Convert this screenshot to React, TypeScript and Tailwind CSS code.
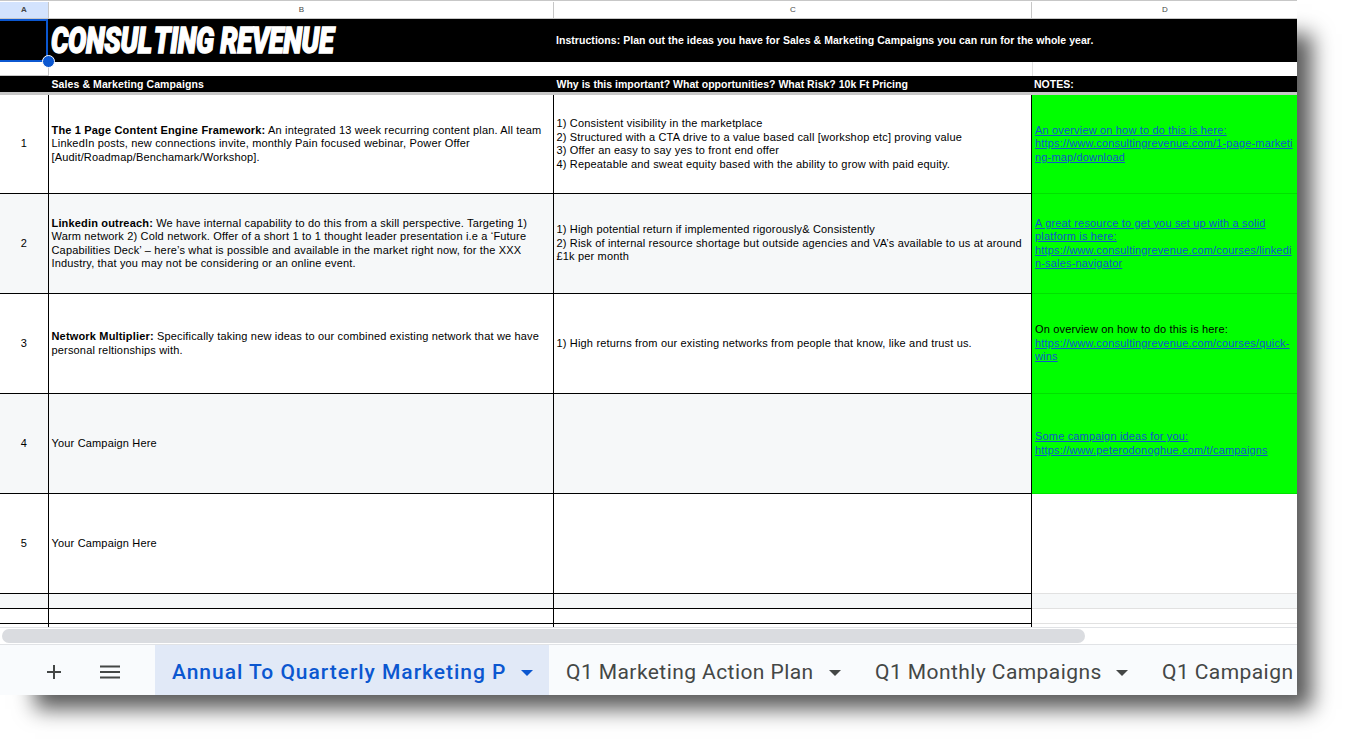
const font = "font-['Liberation_Sans',Arial,sans-serif]";

const Caret = ({ color }: { color: string }) => (
    <svg width="14" height="8" viewBox="0 0 14 8" className="shrink-0">
        <path d="M1 1h12L7 7z" fill={color} />
    </svg>
);

const Link = ({ children }: { children: React.ReactNode }) => (
    <span className="block text-[#1155cc] underline">{children}</span>
);

const rows = [
    {
        n: 1,
        h: "h-[99px]",
        bg: "bg-white",
        b: (
            <>
                <b>The 1 Page Content Engine Framework:</b> An integrated 13 week recurring content plan. All team<br />
                LinkedIn posts, new connections invite, monthly Pain focused webinar, Power Offer<br />
                [Audit/Roadmap/Benchamark/Workshop].
            </>
        ),
        c: (
            <>
                1) Consistent visibility in the marketplace<br />
                2) Structured with a CTA drive to a value based call [workshop etc] proving value<br />
                3) Offer an easy to say yes to front end offer<br />
                4) Repeatable and sweat equity based with the ability to grow with paid equity.
            </>
        ),
        d: (
            <>
                <Link>An overview on how to do this is here:</Link>
                <Link>https://www.consultingrevenue.com/1-page-marketi</Link>
                <Link>ng-map/download</Link>
            </>
        ),
    },
    {
        n: 2,
        h: "h-[100px]",
        bg: "bg-[#f6f8f9]",
        b: (
            <>
                <b>Linkedin outreach:</b> We have internal capability to do this from a skill perspective. Targeting 1)<br />
                Warm network 2) Cold network. Offer of a short 1 to 1 thought leader presentation i.e a ‘Future<br />
                Capabilities Deck’ – here’s what is possible and available in the market right now, for the XXX<br />
                Industry, that you may not be considering or an online event.
            </>
        ),
        c: (
            <>
                1) High potential return if implemented rigorously&amp; Consistently<br />
                2) Risk of internal resource shortage but outside agencies and VA’s available to us at around<br />
                £1k per month
            </>
        ),
        d: (
            <>
                <Link>A great resource to get you set up with a solid</Link>
                <Link>platform is here:</Link>
                <Link>https://www.consultingrevenue.com/courses/linkedi</Link>
                <Link>n-sales-navigator</Link>
            </>
        ),
    },
    {
        n: 3,
        h: "h-[100px]",
        bg: "bg-white",
        b: (
            <>
                <b>Network Multiplier:</b> Specifically taking new ideas to our combined existing network that we have<br />
                personal reltionships with.
            </>
        ),
        c: <>1) High returns from our existing networks from people that know, like and trust us.</>,
        d: (
            <>
                <span className="block">On overview on how to do this is here:</span>
                <Link>https://www.consultingrevenue.com/courses/quick-</Link>
                <Link>wins</Link>
            </>
        ),
    },
    {
        n: 4,
        h: "h-[100px]",
        bg: "bg-[#f6f8f9]",
        b: <>Your Campaign Here</>,
        c: null,
        d: (
            <>
                <Link>Some campaign ideas for you:</Link>
                <Link>https://www.peterodonoghue.com/t/campaigns</Link>
            </>
        ),
    },
    { n: 5, h: "h-[100px]", bg: "bg-white", b: <>Your Campaign Here</>, c: null, d: null },
];

const grid = "grid grid-cols-[49px_505px_478px_265px]";

const Tab = ({ label, w }: { label: string; w: string }) => (
    <div className={`flex items-center justify-between shrink-0 pl-[17px] pr-[16px] ${w}`}>
        <span className="whitespace-nowrap">{label}</span>
        <Caret color="#444746" />
    </div>
);

export default function App() {
    return (
        <div className={`${font} h-[745px] w-[1347px] overflow-hidden bg-white`}>
            <div className="flex h-[695px] w-[1297px] flex-col overflow-hidden bg-white text-[11px] leading-[13.5px] tracking-[0.17px] text-black shadow-[25px_24px_20px_-10px_rgba(0,0,0,0.65)]">
                {/* column letters */}
                <div className={`${grid} h-[19px] shrink-0 border-t border-b border-[#c7c7c7] pt-[1px] text-[8px] text-[#444746]`}>
                    <div className="flex items-center justify-center border-r border-[#c7c7c7] bg-[#d3e3fd] font-bold">A</div>
                    <div className="flex items-center justify-center border-r border-[#c7c7c7] pl-[1px]">B</div>
                    <div className="flex items-center justify-center border-r border-[#c7c7c7] pl-[1px]">C</div>
                    <div className="flex items-center justify-center pl-[1px]">D</div>
                </div>

                {/* title row */}
                <div className={`${grid} relative h-[43px] shrink-0 bg-black text-white`}>
                    <div className="absolute left-[-2px] top-0 h-[43px] w-[50px] border-2 border-[#0b57d0]" />
                    <div className="absolute left-[42px] top-[36px] h-[13px] w-[13px] rounded-full border border-white bg-[#0b57d0]" />
                    <div />
                    <div className="flex items-center overflow-hidden pl-[2px]">
                        <span className="origin-left scale-x-[0.74] whitespace-nowrap text-[37px] font-black italic leading-none tracking-[-0.5px] font-['Roboto',sans-serif] [-webkit-text-stroke:1.5px_white]">
                            <span className="[word-spacing:-5px]">CONSUL TING</span> REVENUE
                        </span>
                    </div>
                    <div className="col-span-2 flex items-center pl-[2px] text-[10.5px] font-bold tracking-[0.05px]">
                        Instructions: Plan out the ideas you have for Sales &amp; Marketing Campaigns you can run for the whole year.
                    </div>
                </div>

                {/* spacer row */}
                <div className={`${grid} h-[14px] shrink-0`}>
                    <div className="border-r border-b border-[#c7c7c7]" />
                    <div />
                    <div />
                    <div className="border-l border-[#e1e1e1]" />
                </div>

                {/* header row */}
                <div className={`${grid} h-[16px] shrink-0 items-center bg-black pt-[1px] text-[10.5px] font-bold tracking-[0.02px] text-white`}>
                    <div />
                    <div className="pl-[2.5px] tracking-[0.09px]">Sales &amp; Marketing Campaigns</div>
                    <div className="pl-[2.5px]">Why is this important? What opportunities? What Risk? 10k Ft Pricing</div>
                    <div className="pl-[2px]">NOTES:</div>
                </div>
                <div className="h-[3px] shrink-0 bg-[#c7c7c7]" />

                {/* data rows */}
                {rows.map((r) => (
                    <div key={r.n} className={`${grid} ${r.h} ${r.bg} shrink-0`}>
                        <div className="flex items-center justify-center border-r border-b border-black">{r.n}</div>
                        <div className="flex items-center border-r border-b border-black pl-[2.5px] whitespace-nowrap">
                            <div>{r.b}</div>
                        </div>
                        <div className="flex items-center border-r border-b border-black pl-[2.5px] whitespace-nowrap">
                            <div>{r.c}</div>
                        </div>
                        <div className={`flex items-center pl-[3px] whitespace-nowrap ${r.n < 5 ? "border-b border-[#00e000] bg-[#00ff00]" : "border-b border-[#e1e1e1]"}`}>
                            <div>{r.d}</div>
                        </div>
                    </div>
                ))}

                {/* empty rows */}
                <div className={`${grid} h-[15px] shrink-0 bg-[#f6f8f9]`}>
                    <div className="border-r border-b border-black" />
                    <div className="border-r border-b border-black" />
                    <div className="border-r border-b border-black" />
                    <div className="border-b border-[#e1e1e1]" />
                </div>
                <div className={`${grid} h-[15px] shrink-0`}>
                    <div className="border-r border-b border-black" />
                    <div className="border-r border-b border-black" />
                    <div className="border-r border-b border-black" />
                    <div className="border-b border-[#e1e1e1]" />
                </div>
                <div className={`${grid} h-[3px] shrink-0`}>
                    <div className="border-r border-black" />
                    <div className="border-r border-black" />
                    <div className="border-r border-black" />
                    <div />
                </div>

                {/* scrollbar */}
                <div className="flex h-[18px] shrink-0 items-center border-t border-b border-[#e1e3e6] pl-[2px]">
                    <div className="h-[14px] w-[1083px] rounded-[7px] bg-[#dadce0]" />
                </div>

                {/* sheet tabs */}
                <div className="flex h-[50px] flex-1 items-stretch bg-[#f9fbfd] text-[21px] tracking-[0.43px] text-[#444746] font-['Roboto',sans-serif]">
                    <div className="flex w-[155px] shrink-0 items-center pt-[4px]">
                        <svg width="16" height="16" viewBox="0 0 16 16" className="ml-[46px]">
                            <path d="M8 1v14M1 8h14" stroke="#444746" strokeWidth="2" />
                        </svg>
                        <svg width="20" height="14" viewBox="0 0 20 14" className="ml-[38px]">
                            <path d="M0 1.5h20M0 7h20M0 12.5h20" stroke="#444746" strokeWidth="2" />
                        </svg>
                    </div>
                    <div className="flex w-[394px] shrink-0 items-center justify-between bg-[#e1e9f7] pl-[17px] pr-[15px] pt-[5px] font-medium tracking-[0.97px] text-[#0b57d0]">
                        <span className="whitespace-nowrap">Annual To Quarterly Marketing P</span>
                        <Caret color="#0b57d0" />
                    </div>
                    <div className="flex items-stretch pt-[5px]">
                        <Tab label="Q1 Marketing Action Plan" w="w-[309px]" />
                        <Tab label="Q1 Monthly Campaigns" w="w-[287px]" />
                        <div className="flex items-center pl-[17px] whitespace-nowrap">Q1 Campaign</div>
                    </div>
                </div>
            </div>
        </div>
    );
}
